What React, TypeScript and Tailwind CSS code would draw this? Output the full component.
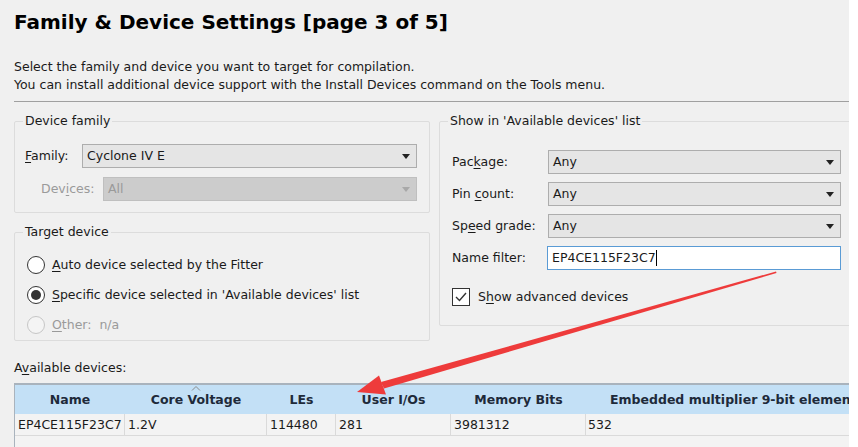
import type { ReactNode } from 'react'

const ui = "font-['DejaVu_Sans',sans-serif] text-[12.5px] leading-[16px] text-[#1a1a1a]"

function Caret({ disabled = false }: { disabled?: boolean }) {
  return (
    <svg width="8" height="5" viewBox="0 0 8 5" aria-hidden="true">
      <path d="M0 0h8L4 5z" fill={disabled ? '#a8a8a8' : '#222'} />
    </svg>
  )
}

function Combo({ value, disabled = false, className = '' }: { value: string; disabled?: boolean; className?: string }) {
  return (
    <div
      className={[
        'h-[24px] flex items-center justify-between pl-[4px] pr-[6px] border',
        disabled ? 'bg-[#cccccc] border-[#bfbfbf] text-[#9a9a9a]' : 'bg-[#e5e5e5] border-[#adadad]',
        className,
      ].join(' ')}
    >
      <span>{value}</span>
      <Caret disabled={disabled} />
    </div>
  )
}

function U({ children }: { children: ReactNode }) {
  return <span className="underline underline-offset-2">{children}</span>
}

function Radio({ checked = false, disabled = false, children }: { checked?: boolean; disabled?: boolean; children: ReactNode }) {
  return (
    <div className="flex items-center gap-[7px] h-[30px]">
      <span
        className={[
          'w-[18px] h-[18px] rounded-full border flex items-center justify-center shrink-0',
          disabled ? 'border-[#c6c6c6] bg-[#f4f4f4]' : 'border-[#333] bg-white',
        ].join(' ')}
      >
        {checked && <span className="w-[10px] h-[10px] rounded-full bg-[#333]" />}
      </span>
      <span className={disabled ? 'text-[#9a9a9a]' : ''}>{children}</span>
    </div>
  )
}

function Group({ title, children, className = '' }: { title: string; children: ReactNode; className?: string }) {
  return (
    <fieldset className={`border border-[#dcdcdc] rounded-[2px] ${className}`}>
      <legend className="ml-[8px] px-[2px] leading-[16px]">{title}</legend>
      {children}
    </fieldset>
  )
}

const columns = [
  { name: 'Name', w: 'w-[110px]', val: 'EP4CE115F23C7' },
  { name: 'Core Voltage', w: 'w-[142px]', val: '1.2V' },
  { name: 'LEs', w: 'w-[69px]', val: '114480' },
  { name: 'User I/Os', w: 'w-[115px]', val: '281' },
  { name: 'Memory Bits', w: 'w-[135px]', val: '3981312' },
]

export default function App() {
  return (
    <div className={`w-[858px] h-[447px] bg-white overflow-hidden ${ui}`}>
      <div className="relative w-[849px] h-[447px] bg-[#f0f0f0] overflow-hidden">
        <h1 className="pl-[14px] pt-[9px] font-bold text-[20px] leading-[26px] text-black">
          Family &amp; Device Settings [page 3 of 5]
        </h1>
        <div className="pl-[14px] mt-[23px] text-[12.5px] leading-[18px]">
          <p>Select the family and device you want to target for compilation.</p>
          <p>You can install additional device support with the Install Devices command on the Tools menu.</p>
        </div>
        <div className="ml-[14px] mt-[7px] border-t border-[#a0a0a0] h-px" />

        <div className="flex gap-[9px] pl-[14px] mt-[11px]">
          <div className="w-[416px] flex flex-col">
            <Group title="Device family" className="h-[100px]">
              <div className="pl-[10px] pr-[12px] pt-[15px]">
                <div className="flex items-center">
                  <span className="w-[57px] shrink-0"><U>F</U>amily:</span>
                  <Combo value="Cyclone IV E" className="flex-1" />
                </div>
                <div className="flex items-center mt-[9px] pl-[16px] text-[#9a9a9a]">
                  <span className="w-[62px] shrink-0">Dev<U>i</U>ces:</span>
                  <Combo value="All" disabled className="flex-1" />
                </div>
              </div>
            </Group>
            <Group title="Target device" className="h-[117px] mt-[11px]">
              <div className="pl-[12px] pt-[10px]">
                <Radio><U>A</U>uto device selected by the Fitter</Radio>
                <Radio checked><U>S</U>pecific device selected in 'Available devices' list</Radio>
                <Radio disabled><U>O</U>ther:&nbsp; n/a</Radio>
              </div>
            </Group>
          </div>

          <Group title="Show in 'Available devices' list" className="flex-1 h-[213px] -mr-[2px]">
            <div className="pl-[12px] pr-[9px] pt-[21px]">
              <div className="flex flex-col gap-[8px]">
                {[
                  [<>Pac<U>k</U>age:</>, 'Any'],
                  [<>Pin <U>c</U>ount:</>, 'Any'],
                  [<>Sp<U>e</U>ed grade:</>, 'Any'],
                ].map(([label, v], i) => (
                  <div key={i} className="flex items-center">
                    <span className="w-[96px] shrink-0">{label}</span>
                    <Combo value={v as string} className="flex-1" />
                  </div>
                ))}
                <div className="flex items-center">
                  <span className="w-[95px] shrink-0">Name filter:</span>
                  <div className="flex-1 h-[24px] bg-white border border-[#5a9bd5] flex items-center pl-[4px]">
                    EP4CE115F23C7<span className="w-px h-[16px] bg-black" />
                  </div>
                </div>
              </div>
              <div className="flex items-center gap-[8px] mt-[18px]">
                <span className="w-[18px] h-[18px] border border-[#333] bg-white flex items-center justify-center">
                  <svg width="12" height="10" viewBox="0 0 12 10" aria-hidden="true">
                    <path d="M1 5l3.5 3.5L11 1" fill="none" stroke="#333" strokeWidth="1.4" />
                  </svg>
                </span>
                <span>S<U>h</U>ow advanced devices</span>
              </div>
            </div>
          </Group>
        </div>

        <p className="pl-[14px] mt-[18px] leading-[18px]">A<U>v</U>ailable devices:</p>

        <div className="ml-[14px] mt-[6px] border-t-2 border-l border-[#a9b3bd] bg-[#f3f3f3] h-[80px]">
          <div className="flex h-[29px] bg-[#c3e0f6] font-bold text-[#1e2a3a] whitespace-nowrap">
            {columns.map((c) => (
              <div key={c.name} className={`${c.w} shrink-0 relative flex items-center justify-center`}>
                {c.name === 'Core Voltage' && (
                  <svg className="absolute top-0 left-[66px]" width="10" height="6" viewBox="0 0 10 6" aria-hidden="true">
                    <path d="M1 5.5L5 1.5l4 4" fill="none" stroke="#8a8a8a" strokeWidth="1" />
                  </svg>
                )}
                {c.name}
              </div>
            ))}
            <div className="flex-1 min-w-0 flex items-center pl-[24px] overflow-hidden">Embedded multiplier 9-bit elements</div>
          </div>
          <div className="flex h-[22px] border-b border-[#dadada] whitespace-nowrap">
            {columns.map((c) => (
              <div key={c.name} className={`${c.w} shrink-0 border-r border-[#dadada] flex items-center pl-[3px]`}>
                {c.val}
              </div>
            ))}
            <div className="flex-1 flex items-center pl-[2px]">532</div>
          </div>
        </div>

        <svg className="absolute inset-0 pointer-events-none" width="849" height="447" aria-hidden="true">
          <polygon points="776,271.5 776.5,273 384,388.5 381,382" fill="#ee3b3b" />
          <polygon points="357,392 379,375.5 386,394.5" fill="#ee3b3b" />
        </svg>
      </div>
    </div>
  )
}
